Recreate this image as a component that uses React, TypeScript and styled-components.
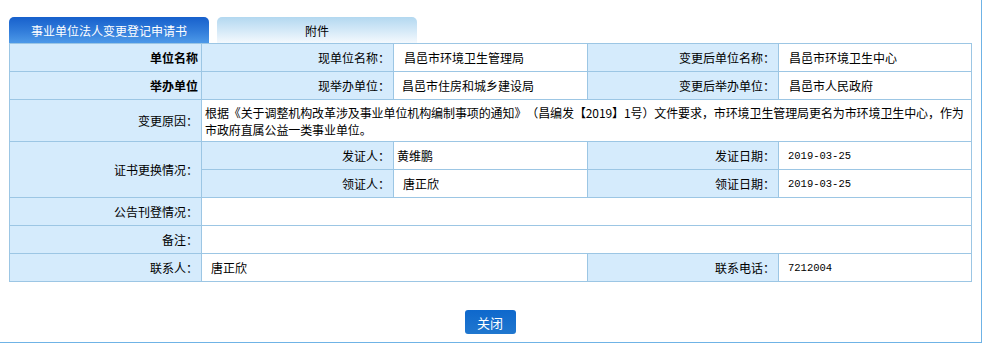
import styled, { createGlobalStyle } from "styled-components"
import type React from "react"

const GlobalStyle = createGlobalStyle`
  html, body {
    margin: 0;
    padding: 0;
    background: #ffffff;
  }
  body {
    font-family: "Noto Sans CJK SC", "Liberation Sans", sans-serif;
    font-size: 12px;
    color: #000;
    text-spacing-trim: space-all;
  }
`

const Frame = styled.div`
  box-sizing: border-box;
  width: 982px;
  height: 343px;
  padding: 17px 11px 0 9px;
  border-right: 1px solid #6fb3e6;
  border-bottom: 1px solid #6fb3e6;
`

const TabBar = styled.div`
  display: flex;
  gap: 8px;
  height: 26px;
`

const Tab = styled.div<{ $active?: boolean }>`
  width: 200px;
  height: 26px;
  box-sizing: border-box;
  display: flex;
  align-items: center;
  justify-content: center;
  border-radius: 5px 5px 0 0;
  font-size: 12px;
  color: ${(p) => (p.$active ? "#ffffff" : "#000000")};
  background: ${(p) =>
    p.$active
      ? "linear-gradient(to bottom, #1760cc 0%, #2f7ad9 50%, #4d99e8 100%)"
      : "linear-gradient(to bottom, #b3d8f0 0%, #d6eaf8 55%, #f4f9fe 100%)"};
`

const Table = styled.table`
  width: 962px;
  table-layout: fixed;
  border-collapse: collapse;
  font-size: 12px;
`

const Label = styled.td<{ $bold?: boolean }>`
  height: 27px;
  padding: 0 3px 0 0;
  background: #d5ebfc;
  border: 1px solid #9cc6e4;
  text-align: right;
  font-weight: ${(p) => (p.$bold ? "bold" : "normal")};
  white-space: nowrap;
  vertical-align: middle;
`

const Value = styled.td<{ $pad?: number; $mono?: boolean }>`
  height: 27px;
  padding: 0 0 0 ${(p) => p.$pad ?? 3}px;
  background: #ffffff;
  border: 1px solid #9cc6e4;
  text-align: left;
  white-space: nowrap;
  vertical-align: middle;
  font-family: ${(p) =>
    p.$mono ? '"Liberation Mono", monospace' : '"Noto Sans CJK SC", sans-serif'};
  font-size: ${(p) => (p.$mono ? "10.5px" : "12px")};
`

const Reason = styled.td`
  height: 41px;
  padding: 0 0 0 3px;
  border: 1px solid #9cc6e4;
  line-height: 17px;
  letter-spacing: -0.1px;
  white-space: nowrap;
  vertical-align: middle;
`

const Footer = styled.div`
  width: 962px;
  display: flex;
  justify-content: center;
  padding-top: 28px;
`

const Button = styled.button`
  width: 51px;
  height: 24px;
  padding: 0;
  border: none;
  border-radius: 3px;
  background: linear-gradient(to bottom, #0e68cc, #2077cf);
  color: #ffffff;
  font-family: "Noto Sans CJK SC", sans-serif;
  font-size: 13px;
  cursor: pointer;
`

const App: React.FC = () => {
  return (
    <>
      <GlobalStyle />
      <Frame>
        <TabBar>
          <Tab $active>事业单位法人变更登记申请书</Tab>
          <Tab>附件</Tab>
        </TabBar>
        <Table>
          <colgroup>
            <col style={{ width: 192 }} />
            <col style={{ width: 192 }} />
            <col style={{ width: 194 }} />
            <col style={{ width: 191 }} />
            <col style={{ width: 193 }} />
          </colgroup>
          <tbody>
            <tr>
              <Label $bold>单位名称</Label>
              <Label>现单位名称：</Label>
              <Value $pad={10}>昌邑市环境卫生管理局</Value>
              <Label>变更后单位名称：</Label>
              <Value $pad={10}>昌邑市环境卫生中心</Value>
            </tr>
            <tr>
              <Label $bold>举办单位</Label>
              <Label>现举办单位：</Label>
              <Value $pad={8}>昌邑市住房和城乡建设局</Value>
              <Label>变更后举办单位：</Label>
              <Value $pad={10}>昌邑市人民政府</Value>
            </tr>
            <tr>
              <Label>变更原因：</Label>
              <Reason colSpan={4}>
                根据《关于调整机构改革涉及事业单位机构编制事项的通知》（昌编发【2019】1号）文件要求，市环境卫生管理局更名为市环境卫生中心，作为
                <br />
                市政府直属公益一类事业单位。
              </Reason>
            </tr>
            <tr>
              <Label rowSpan={2}>证书更换情况：</Label>
              <Label>发证人：</Label>
              <Value $pad={3}>黄维鹏</Value>
              <Label>发证日期：</Label>
              <Value $pad={9} $mono>2019-03-25</Value>
            </tr>
            <tr>
              <Label>领证人：</Label>
              <Value $pad={9}>唐正欣</Value>
              <Label>领证日期：</Label>
              <Value $pad={9} $mono>2019-03-25</Value>
            </tr>
            <tr>
              <Label>公告刊登情况：</Label>
              <Value colSpan={4}></Value>
            </tr>
            <tr>
              <Label>备注：</Label>
              <Value colSpan={4}></Value>
            </tr>
            <tr>
              <Label>联系人：</Label>
              <Value colSpan={2} $pad={9}>唐正欣</Value>
              <Label>联系电话：</Label>
              <Value $pad={9} $mono>7212004</Value>
            </tr>
          </tbody>
        </Table>
        <Footer>
          <Button>关闭</Button>
        </Footer>
      </Frame>
    </>
  )
}

export default App
